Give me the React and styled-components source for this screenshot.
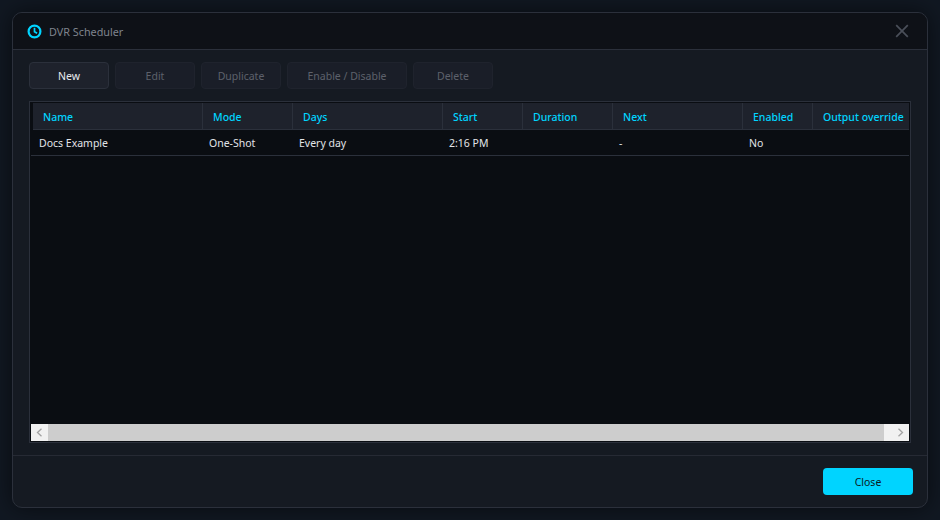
import React from 'react';
import styled, { createGlobalStyle } from 'styled-components';

const GlobalStyle = createGlobalStyle`
  html, body {
    margin: 0;
    height: 100%;
    background: #111822;
  }
  * { box-sizing: border-box; }
`;

const Page = styled.div`
  width: 940px;
  height: 520px;
  padding: 12px;
  font-family: "Noto Sans", "Open Sans", sans-serif;
  font-size: 10.5px;
`;

const Dialog = styled.div`
  width: 916px;
  height: 496px;
  display: flex;
  flex-direction: column;
  background: #151a22;
  border: 1px solid #2b303b;
  border-radius: 10px;
  box-shadow: 0 0 22px rgba(0, 0, 0, 0.55);
  overflow: hidden;
`;

const TitleBar = styled.header`
  height: 37px;
  flex: none;
  display: flex;
  align-items: center;
  padding: 0 18px 0 14px;
  gap: 7px;
  background: #0e1117;
  border-bottom: 1px solid #2b303b;
`;

const Title = styled.span`
  flex: 1;
  color: #7f848e;
  font-size: 10.8px;
`;

const CloseX = styled.button`
  display: flex;
  padding: 0;
  border: 0;
  background: none;
`;

const Content = styled.main`
  flex: 1;
  display: flex;
  flex-direction: column;
  padding: 12px 16px;
  min-height: 0;
`;

const Toolbar = styled.div`
  display: flex;
  gap: 6px;
  margin-bottom: 12px;
`;

const ToolButton = styled.button`
  width: ${(p) => p.$width || 80}px;
  height: 27px;
  padding: 0;
  font: inherit;
  border-radius: 4px;
  border: 1px solid ${(p) => (p.disabled ? '#1f232d' : '#2b303b')};
  background: ${(p) => (p.disabled ? '#1a1e28' : '#1e222c')};
  color: ${(p) => (p.disabled ? '#5d616b' : '#e8eaee')};
`;

const TableFrame = styled.div`
  width: 882px;
  flex: 1;
  min-height: 0;
  display: flex;
  flex-direction: column;
  padding: 1px;
  background: #0a0d12;
  border: 1px solid #2b303b;
`;

const Rows = styled.div`
  flex: 1;
  min-height: 0;
`;

const HeadRow = styled.div`
  display: flex;
  height: 27px;
  margin-left: 2px;
  background: #1e222c;
  border-bottom: 1px solid #2b303b;
`;

const BodyRow = styled.div`
  display: flex;
  height: 26px;
  padding-left: 2px;
  border-bottom: 1px solid #2b303b;
`;

const HeadCell = styled.div`
  width: ${(p) => p.$width}px;
  flex: none;
  display: flex;
  align-items: center;
  padding: 1px 0 0 10px;
  white-space: nowrap;
  overflow: hidden;
  color: #00d4ff;
  font-weight: 500;
  border-right: 1px solid #2b303b;

  &:last-child {
    border-right: 0;
  }
`;

const Cell = styled.div`
  width: ${(p) => p.$width}px;
  flex: none;
  display: flex;
  align-items: center;
  padding-left: 6px;
  color: #e2e4e8;
`;

const Scrollbar = styled.div`
  height: 17px;
  flex: none;
  display: flex;
  background: #f1f1f1;
`;

const ScrollArrow = styled.div`
  width: 17px;
  flex: none;
  display: flex;
  align-items: center;
  justify-content: center;
`;

const ScrollThumb = styled.div`
  flex: 1;
  margin-right: 8px;
  background: #cdcdcd;
`;

const Footer = styled.footer`
  height: 52px;
  flex: none;
  display: flex;
  align-items: center;
  justify-content: flex-end;
  padding-right: 14px;
  border-top: 1px solid #262a34;
`;

const PrimaryButton = styled.button`
  width: 90px;
  height: 27px;
  padding: 0;
  font: inherit;
  color: #0b1a22;
  background: #00d4ff;
  border: 0;
  border-radius: 4px;
`;

const columns = [
  { label: 'Name', width: 170, cell: 'Docs Example' },
  { label: 'Mode', width: 90, cell: 'One-Shot' },
  { label: 'Days', width: 150, cell: 'Every day' },
  { label: 'Start', width: 80, cell: '2:16 PM' },
  { label: 'Duration', width: 90, cell: '' },
  { label: 'Next', width: 130, cell: '-' },
  { label: 'Enabled', width: 70, cell: 'No' },
  { label: 'Output override', width: 96, cell: '' },
];

const ClockIcon = () => (
  <svg width="15" height="15" viewBox="0 0 15 15" fill="none" stroke="#00d4ff" strokeWidth="2.2">
    <circle cx="7.5" cy="7.5" r="5.9" />
    <path d="M7.5 3.8v4l2.6 1.5" strokeWidth="1.7" />
  </svg>
);

const CrossIcon = () => (
  <svg width="14" height="14" viewBox="0 0 14 14" stroke="#4a4f59" strokeWidth="1.7">
    <path d="M1.2 1.2l11.6 11.6M12.8 1.2L1.2 12.8" />
  </svg>
);

const Chevron = ({ dir }) => (
  <svg width="7" height="9" viewBox="0 0 7 9" fill="none" stroke="#a3a3a3" strokeWidth="1.3">
    <path d={dir === 'left' ? 'M5.5 .8L1.5 4.5l4 3.7' : 'M1.5 .8l4 3.7-4 3.7'} />
  </svg>
);

export default function App() {
  return (
    <Page>
      <GlobalStyle />
      <Dialog>
        <TitleBar>
          <ClockIcon />
          <Title>DVR Scheduler</Title>
          <CloseX><CrossIcon /></CloseX>
        </TitleBar>
        <Content>
          <Toolbar>
            <ToolButton>New</ToolButton>
            <ToolButton disabled>Edit</ToolButton>
            <ToolButton disabled>Duplicate</ToolButton>
            <ToolButton disabled $width={120}>Enable / Disable</ToolButton>
            <ToolButton disabled>Delete</ToolButton>
          </Toolbar>
          <TableFrame>
            <Rows>
              <HeadRow>
                {columns.map((c) => (
                  <HeadCell key={c.label} $width={c.width}>{c.label}</HeadCell>
                ))}
              </HeadRow>
              <BodyRow>
                {columns.map((c) => (
                  <Cell key={c.label} $width={c.width}>{c.cell}</Cell>
                ))}
              </BodyRow>
            </Rows>
            <Scrollbar>
              <ScrollArrow><Chevron dir="left" /></ScrollArrow>
              <ScrollThumb />
              <ScrollArrow><Chevron dir="right" /></ScrollArrow>
            </Scrollbar>
          </TableFrame>
        </Content>
        <Footer>
          <PrimaryButton>Close</PrimaryButton>
        </Footer>
      </Dialog>
    </Page>
  );
}
